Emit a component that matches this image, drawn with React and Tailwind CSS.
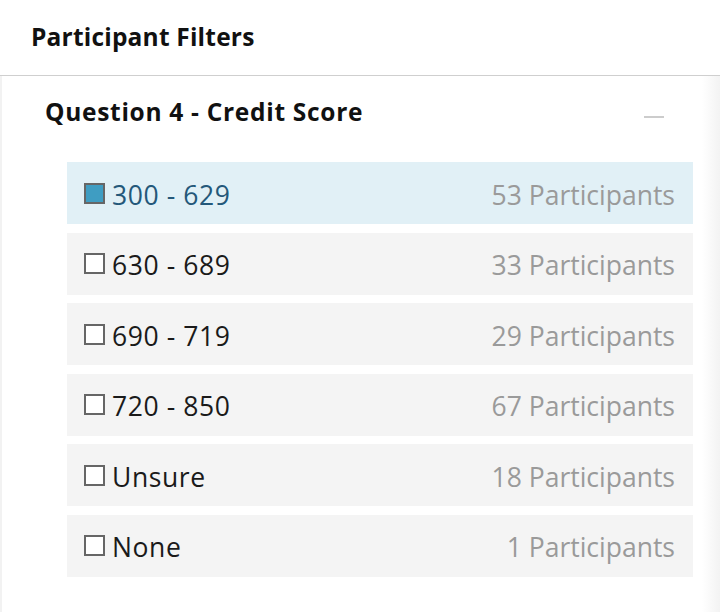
import { useState } from "react";

const options = [
  { label: "300 - 629", count: 53 },
  { label: "630 - 689", count: 33 },
  { label: "690 - 719", count: 29 },
  { label: "720 - 850", count: 67 },
  { label: "Unsure", count: 18 },
  { label: "None", count: 1 },
];

export default function App() {
  const [selected, setSelected] = useState(["300 - 629"]);

  const toggle = (label) => {
    setSelected((prev) =>
      prev.includes(label) ? prev.filter((l) => l !== label) : [...prev, label]
    );
  };

  return (
    <div
      className="w-[720px] h-[612px] bg-white overflow-hidden"
      style={{ fontFamily: "'Open Sans', 'Noto Sans', sans-serif" }}
    >
      {/* Header */}
      <div className="h-[76px] flex items-center pl-[31px] border-b border-[#cfcfcf]">
        <h1 className="text-[24.5px] font-bold text-[#111] tracking-[0.2px]">Participant Filters</h1>
      </div>

      <div className="relative border-l-2 border-[#f2f2f2] h-[536px]">
        {/* right shadow */}
        <div className="absolute right-0 top-0 bottom-0 w-[18px] bg-gradient-to-r from-white to-[#f3f3f3]" />

        {/* Question header */}
        <div className="flex items-center justify-between pl-[43px] pr-[56px] h-[72px]">
          <h2 className="text-[24.5px] font-bold text-[#111] tracking-[0.7px]">Question 4 - Credit Score</h2>
          <div className="w-[20px] h-[2px] bg-[#cccccc] mt-[10px]" />
        </div>

        {/* Options */}
        <div className="flex flex-col gap-[8.5px] ml-[65px] w-[626px] mt-[14px]">
          {options.map((opt) => {
            const isOn = selected.includes(opt.label);
            return (
              <div
                key={opt.label}
                onClick={() => toggle(opt.label)}
                className={`h-[62px] flex items-center justify-between pl-[17px] pr-[18px] cursor-pointer ${
                  isOn ? "bg-[#e1f0f6]" : "bg-[#f4f4f4]"
                }`}
              >
                <div className="flex items-center gap-[7px]">
                  <span
                    className={`w-[21px] h-[21px] border-[2.5px] border-[#666666] ${
                      isOn ? "bg-[#3f9dc2]" : "bg-white"
                    }`}
                  />
                  <span
                    className={`text-[26.5px] tracking-[0.6px] pt-[5px] ${isOn ? "text-[#24587a]" : "text-[#1a1a1a]"}`}
                  >
                    {opt.label}
                  </span>
                </div>
                <span className="text-[26.5px] pt-[5px] text-[#9a9a9a]">{opt.count} Participants</span>
              </div>
            );
          })}
        </div>
      </div>
    </div>
  );
}
